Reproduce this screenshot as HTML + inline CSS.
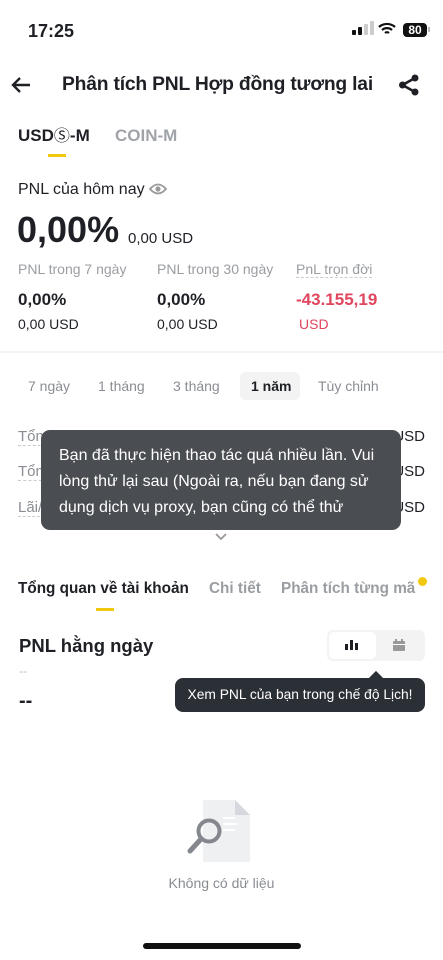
<!DOCTYPE html>
<html><head><meta charset="utf-8"><style>
*{margin:0;padding:0;box-sizing:border-box}
body{width:443px;height:960px;background:#fff;font-family:"Liberation Sans","Noto Sans CJK SC",sans-serif;color:#1e2026;position:relative;overflow:hidden}
.a{position:absolute;white-space:nowrap}
.g{color:#8a8d93}
</style></head><body>
<div class="a" style="left:28px;top:21px;font-size:18px;font-weight:bold">17:25</div>
<div class="a" style="left:352px;top:30px;width:4px;height:5px;background:#111;border-radius:1px"></div>
<div class="a" style="left:358px;top:27px;width:4px;height:8px;background:#111;border-radius:1px"></div>
<div class="a" style="left:364px;top:24px;width:4px;height:11px;background:#ccc;border-radius:1px"></div>
<div class="a" style="left:370px;top:21px;width:4px;height:14px;background:#ccc;border-radius:1px"></div>
<svg class="a" style="left:378px;top:22px" width="18" height="14" viewBox="0 0 18 14"><path d="M1 5a12 12 0 0 1 16 0M4 8a7.5 7.5 0 0 1 10 0M7 11a3 3 0 0 1 4 0" stroke="#111" stroke-width="2.2" fill="none"/></svg>
<div class="a" style="left:403px;top:23px;width:24px;height:14px;background:#111;border-radius:4px;color:#fff;font-size:12px;font-weight:bold;line-height:14px;text-align:center">80</div>
<div class="a" style="left:428px;top:27px;width:2px;height:5px;background:#bbb"></div>

<svg class="a" style="left:11px;top:76px" width="20" height="18" viewBox="0 0 20 18"><path d="M19 9H3M9 2L2 9l7 7" stroke="#1e2026" stroke-width="2.4" fill="none"/></svg>
<div class="a" style="left:62px;top:74px;font-size:19.3px;font-weight:bold;letter-spacing:-0.2px">Phân tích PNL Hợp đồng tương lai</div>
<svg class="a" style="left:398px;top:74px" width="22" height="22" viewBox="0 0 22 22"><circle cx="17" cy="4" r="3.5" fill="#1e2026"/><circle cx="4.5" cy="11" r="3.5" fill="#1e2026"/><circle cx="17" cy="18" r="3.5" fill="#1e2026"/><path d="M17 4L4.5 11L17 18" stroke="#1e2026" stroke-width="2.6" fill="none"/></svg>

<div class="a" style="left:18px;top:126px;font-size:17px;font-weight:bold;line-height:20px">USD<span style="font-family:'DejaVu Sans',sans-serif;font-weight:normal;font-size:16px">Ⓢ</span>-M</div>
<div class="a" style="left:115px;top:126px;font-size:17px;font-weight:bold;color:#a0a3a8;line-height:20px">COIN-M</div>
<div class="a" style="left:48px;top:154px;width:18px;height:3px;background:#f0c90f"></div>

<div class="a" style="left:18px;top:181px;font-size:16px">PNL của hôm nay</div>
<svg class="a" style="left:149px;top:182px" width="18" height="14" viewBox="0 0 18 14"><path d="M1 7Q9 -2 17 7Q9 16 1 7Z" stroke="#999" stroke-width="1.8" fill="none"/><circle cx="9" cy="7" r="2.6" fill="#999"/></svg>
<div class="a" style="left:17px;top:209px;font-size:36px;font-weight:bold">0,00%</div>
<div class="a" style="left:128px;top:230px;font-size:15px">0,00 USD</div>

<div class="a" style="left:18px;top:261px;font-size:14px;color:#9a9da2">PNL trong 7 ngày</div>
<div class="a" style="left:157px;top:261px;font-size:14px;color:#9a9da2">PNL trong 30 ngày</div>
<div class="a" style="left:296px;top:261px;font-size:14px;color:#9a9da2;border-bottom:1px dashed #ccc">PnL trọn đời</div>
<div class="a" style="left:18px;top:290px;font-size:17px;font-weight:bold">0,00%</div>
<div class="a" style="left:157px;top:290px;font-size:17px;font-weight:bold">0,00%</div>
<div class="a" style="left:296px;top:290px;font-size:17px;font-weight:bold;color:#e0465e">-43.155,19</div>
<div class="a" style="left:18px;top:316px;font-size:14px">0,00 USD</div>
<div class="a" style="left:157px;top:316px;font-size:14px">0,00 USD</div>
<div class="a" style="left:299px;top:316px;font-size:14px;color:#e0465e">USD</div>
<div class="a" style="left:0;top:351px;width:443px;height:2px;background:#f3f3f3"></div>

<div class="a" style="left:240px;top:372px;width:60px;height:28px;background:#f3f3f3;border-radius:6px"></div>
<div class="a g" style="left:28px;top:378px;font-size:14px">7 ngày</div>
<div class="a g" style="left:98px;top:378px;font-size:14px">1 tháng</div>
<div class="a g" style="left:173px;top:378px;font-size:14px">3 tháng</div>
<div class="a" style="left:251px;top:378px;font-size:14px;font-weight:bold">1 năm</div>
<div class="a g" style="left:318px;top:378px;font-size:14px">Tùy chỉnh</div>

<div class="a g" style="left:18px;top:428px;font-size:15px;border-bottom:1px dashed #ccc">Tổng lợi nhuận</div>
<div class="a g" style="left:18px;top:463px;font-size:15px;border-bottom:1px dashed #ccc">Tổng lỗ</div>
<div class="a g" style="left:18px;top:499px;font-size:15px;border-bottom:1px dashed #ccc">Lãi/lỗ</div>
<div class="a" style="right:18px;top:428px;font-size:15px">-- USD</div>
<div class="a" style="right:18px;top:463px;font-size:15px">-- USD</div>
<div class="a" style="right:18px;top:499px;font-size:15px">-- USD</div>

<div class="a" style="left:41px;top:430px;width:360px;height:100px;background:#4a4d52;border-radius:9px"></div>
<div class="a" style="left:59px;top:443px;font-size:16px;color:#fff;line-height:26px">Bạn đã thực hiện thao tác quá nhiều lần. Vui<br>lòng thử lại sau (Ngoài ra, nếu bạn đang sử<br>dụng dịch vụ proxy, bạn cũng có thể thử</div>
<svg class="a" style="left:215px;top:533px" width="12" height="8" viewBox="0 0 12 8"><path d="M1 1l5 5 5-5" stroke="#999" stroke-width="1.8" fill="none"/></svg>

<div class="a" style="left:18px;top:580px;font-size:15.3px;font-weight:bold">Tổng quan về tài khoản</div>
<div class="a" style="left:209px;top:580px;font-size:15.3px;font-weight:bold;color:#9a9da2">Chi tiết</div>
<div class="a" style="left:281px;top:580px;font-size:15.3px;font-weight:bold;color:#9a9da2">Phân tích từng mã</div>
<div class="a" style="left:418px;top:577px;width:9px;height:9px;border-radius:50%;background:#f0c90f"></div>
<div class="a" style="left:96px;top:608px;width:18px;height:3px;background:#f0c90f"></div>

<div class="a" style="left:19px;top:635px;font-size:18.5px;font-weight:bold">PNL hằng ngày</div>
<div class="a" style="left:327px;top:630px;width:98px;height:31px;background:#f3f3f3;border-radius:6px"></div>
<div class="a" style="left:329px;top:632px;width:47px;height:27px;background:#fff;border-radius:5px"></div>
<svg class="a" style="left:344px;top:639px" width="15" height="12" viewBox="0 0 15 12"><rect x="1" y="5" width="3" height="6" fill="#1e2026"/><rect x="6" y="1" width="3" height="10" fill="#1e2026"/><rect x="11" y="4" width="3" height="7" fill="#1e2026"/></svg>
<svg class="a" style="left:392px;top:638px" width="14" height="14" viewBox="0 0 14 14"><rect x="1" y="3" width="12" height="10" rx="1" fill="#999"/><rect x="3" y="1" width="2" height="3" fill="#999"/><rect x="9" y="1" width="2" height="3" fill="#999"/><rect x="1" y="6" width="12" height="1" fill="#fff"/></svg>
<div class="a" style="left:19px;top:664px;font-size:12px;color:#bbb">--</div>
<div class="a" style="left:19px;top:690px;font-size:20px;font-weight:bold">--</div>

<div class="a" style="left:371px;top:673px;width:10px;height:10px;background:#2b2f36;transform:rotate(45deg)"></div>
<div class="a" style="left:175px;top:678px;width:250px;height:34px;background:#2b2f36;border-radius:8px;color:#fff;font-size:13.8px;line-height:34px;text-align:center">Xem PNL của bạn trong chế độ Lịch!</div>

<svg class="a" style="left:185px;top:798px" width="68" height="66" viewBox="0 0 68 66"><path d="M18 2H50L65 17V64H18Z" fill="#eef0f2"/><path d="M50 2V17H65Z" fill="#d5d8dc"/><path d="M38 20h12M38 26h14M38 32h12" stroke="#fff" stroke-width="2"/><circle cx="24" cy="33" r="10.5" stroke="#84888e" stroke-width="4" fill="none"/><path d="M16 41L5 53" stroke="#84888e" stroke-width="5" stroke-linecap="round"/></svg>
<div class="a" style="left:0;width:443px;text-align:center;top:875px;font-size:14px;color:#8a8d93">Không có dữ liệu</div>

<div class="a" style="left:143px;top:943px;width:158px;height:6px;border-radius:3px;background:#111"></div>
</body></html>
